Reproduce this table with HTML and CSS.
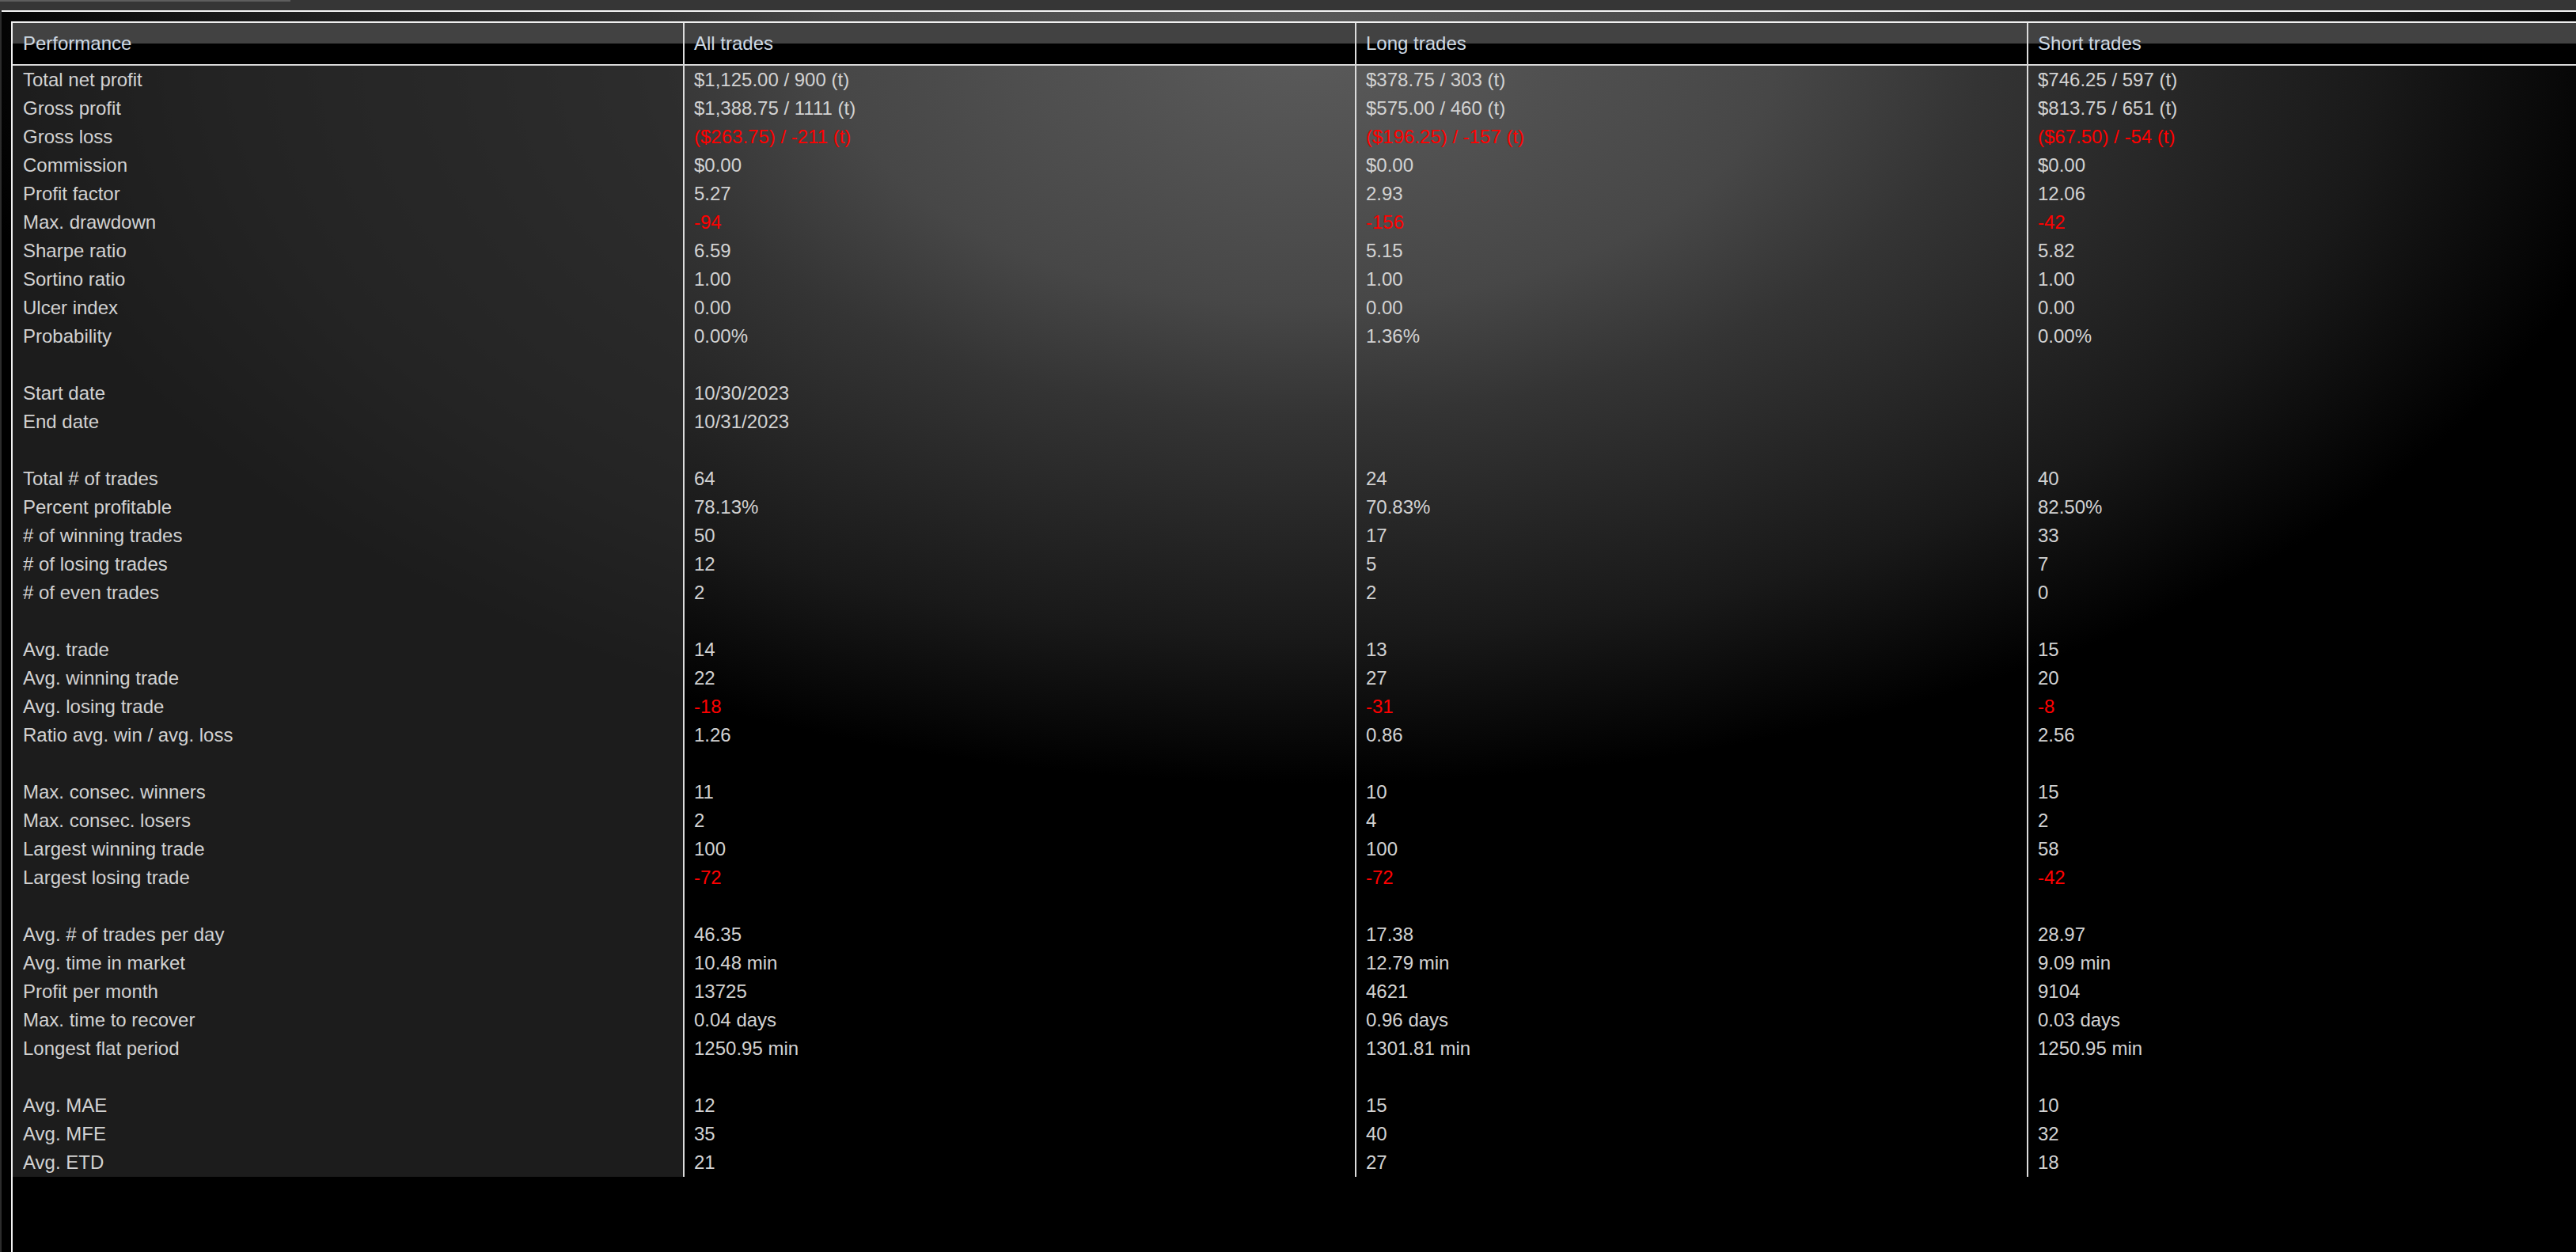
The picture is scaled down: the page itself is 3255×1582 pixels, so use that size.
FILE: index.html
```html
<!DOCTYPE html>
<html lang="en">
<head>
<meta charset="utf-8">
<title>Performance</title>
<link rel="stylesheet" href="styles.css">
</head>
<body>
<div class="topbar"><div class="tab"></div></div>
<div class="panel">
  <div class="frame">
  <div class="grid">
    <div class="row head">
      <div class="cell">Performance</div>
      <div class="cell">All trades</div>
      <div class="cell">Long trades</div>
      <div class="cell">Short trades</div>
    </div>
    <div class="row"><div class="cell">Total net profit</div><div class="cell">$1,125.00 / 900 (t)</div><div class="cell">$378.75 / 303 (t)</div><div class="cell">$746.25 / 597 (t)</div></div>
    <div class="row"><div class="cell">Gross profit</div><div class="cell">$1,388.75 / 1111 (t)</div><div class="cell">$575.00 / 460 (t)</div><div class="cell">$813.75 / 651 (t)</div></div>
    <div class="row"><div class="cell">Gross loss</div><div class="cell neg">($263.75) / -211 (t)</div><div class="cell neg">($196.25) / -157 (t)</div><div class="cell neg">($67.50) / -54 (t)</div></div>
    <div class="row"><div class="cell">Commission</div><div class="cell">$0.00</div><div class="cell">$0.00</div><div class="cell">$0.00</div></div>
    <div class="row"><div class="cell">Profit factor</div><div class="cell">5.27</div><div class="cell">2.93</div><div class="cell">12.06</div></div>
    <div class="row"><div class="cell">Max. drawdown</div><div class="cell neg">-94</div><div class="cell neg">-156</div><div class="cell neg">-42</div></div>
    <div class="row"><div class="cell">Sharpe ratio</div><div class="cell">6.59</div><div class="cell">5.15</div><div class="cell">5.82</div></div>
    <div class="row"><div class="cell">Sortino ratio</div><div class="cell">1.00</div><div class="cell">1.00</div><div class="cell">1.00</div></div>
    <div class="row"><div class="cell">Ulcer index</div><div class="cell">0.00</div><div class="cell">0.00</div><div class="cell">0.00</div></div>
    <div class="row"><div class="cell">Probability</div><div class="cell">0.00%</div><div class="cell">1.36%</div><div class="cell">0.00%</div></div>
    <div class="row"><div class="cell"></div><div class="cell"></div><div class="cell"></div><div class="cell"></div></div>
    <div class="row"><div class="cell">Start date</div><div class="cell">10/30/2023</div><div class="cell"></div><div class="cell"></div></div>
    <div class="row"><div class="cell">End date</div><div class="cell">10/31/2023</div><div class="cell"></div><div class="cell"></div></div>
    <div class="row"><div class="cell"></div><div class="cell"></div><div class="cell"></div><div class="cell"></div></div>
    <div class="row"><div class="cell">Total # of trades</div><div class="cell">64</div><div class="cell">24</div><div class="cell">40</div></div>
    <div class="row"><div class="cell">Percent profitable</div><div class="cell">78.13%</div><div class="cell">70.83%</div><div class="cell">82.50%</div></div>
    <div class="row"><div class="cell"># of winning trades</div><div class="cell">50</div><div class="cell">17</div><div class="cell">33</div></div>
    <div class="row"><div class="cell"># of losing trades</div><div class="cell">12</div><div class="cell">5</div><div class="cell">7</div></div>
    <div class="row"><div class="cell"># of even trades</div><div class="cell">2</div><div class="cell">2</div><div class="cell">0</div></div>
    <div class="row"><div class="cell"></div><div class="cell"></div><div class="cell"></div><div class="cell"></div></div>
    <div class="row"><div class="cell">Avg. trade</div><div class="cell">14</div><div class="cell">13</div><div class="cell">15</div></div>
    <div class="row"><div class="cell">Avg. winning trade</div><div class="cell">22</div><div class="cell">27</div><div class="cell">20</div></div>
    <div class="row"><div class="cell">Avg. losing trade</div><div class="cell neg">-18</div><div class="cell neg">-31</div><div class="cell neg">-8</div></div>
    <div class="row"><div class="cell">Ratio avg. win / avg. loss</div><div class="cell">1.26</div><div class="cell">0.86</div><div class="cell">2.56</div></div>
    <div class="row"><div class="cell"></div><div class="cell"></div><div class="cell"></div><div class="cell"></div></div>
    <div class="row"><div class="cell">Max. consec. winners</div><div class="cell">11</div><div class="cell">10</div><div class="cell">15</div></div>
    <div class="row"><div class="cell">Max. consec. losers</div><div class="cell">2</div><div class="cell">4</div><div class="cell">2</div></div>
    <div class="row"><div class="cell">Largest winning trade</div><div class="cell">100</div><div class="cell">100</div><div class="cell">58</div></div>
    <div class="row"><div class="cell">Largest losing trade</div><div class="cell neg">-72</div><div class="cell neg">-72</div><div class="cell neg">-42</div></div>
    <div class="row"><div class="cell"></div><div class="cell"></div><div class="cell"></div><div class="cell"></div></div>
    <div class="row"><div class="cell">Avg. # of trades per day</div><div class="cell">46.35</div><div class="cell">17.38</div><div class="cell">28.97</div></div>
    <div class="row"><div class="cell">Avg. time in market</div><div class="cell">10.48 min</div><div class="cell">12.79 min</div><div class="cell">9.09 min</div></div>
    <div class="row"><div class="cell">Profit per month</div><div class="cell">13725</div><div class="cell">4621</div><div class="cell">9104</div></div>
    <div class="row"><div class="cell">Max. time to recover</div><div class="cell">0.04 days</div><div class="cell">0.96 days</div><div class="cell">0.03 days</div></div>
    <div class="row"><div class="cell">Longest flat period</div><div class="cell">1250.95 min</div><div class="cell">1301.81 min</div><div class="cell">1250.95 min</div></div>
    <div class="row"><div class="cell"></div><div class="cell"></div><div class="cell"></div><div class="cell"></div></div>
    <div class="row"><div class="cell">Avg. MAE</div><div class="cell">12</div><div class="cell">15</div><div class="cell">10</div></div>
    <div class="row"><div class="cell">Avg. MFE</div><div class="cell">35</div><div class="cell">40</div><div class="cell">32</div></div>
    <div class="row"><div class="cell">Avg. ETD</div><div class="cell">21</div><div class="cell">27</div><div class="cell">18</div></div>
  </div>
  </div>
</div>
</body>
</html>
```

FILE: styles.css
```css
html, body {
  margin: 0;
  padding: 0;
}

body {
  width: 3255px;
  height: 1582px;
  overflow: hidden;
  background: #2c2c2c;
  font-family: "Liberation Sans", Arial, sans-serif;
  font-size: 24px;
  color: #d2d2d2;
}

.topbar {
  height: 13px;
  background: #363636;
}

.tab {
  width: 367px;
  height: 2px;
  background: #5e5e5e;
}

.panel {
  box-sizing: border-box;
  height: 1569px;
  margin-left: 2px;
  padding: 12px 0 0 12px;
  border-top: 2px solid #f4f4f4;
  overflow: hidden;
  background-color: #000;
  background-image: radial-gradient(1700px 930px at 1648px 45px, #5a5a5a 0%, #474747 35%, #343434 50%, #191919 80%, #000 100%);
}

.frame {
  box-sizing: border-box;
  height: 100%;
  border-top: 2px solid #f0f0f0;
  border-left: 2px solid #f0f0f0;
}

.grid {
  width: 3394px;
}

.row {
  display: flex;
  height: 36px;
}

.cell {
  box-sizing: border-box;
  flex: 0 0 849px;
  height: 100%;
  padding-left: 12px;
  border-left: 2px solid #dcdcdc;
  line-height: 36px;
  white-space: nowrap;
  overflow: hidden;
}

.cell:first-child {
  flex-basis: 847px;
  padding-left: 13px;
  border-left: none;
  background: rgba(41, 41, 41, 0.68);
}

.head {
  height: 54px;
  box-sizing: border-box;
  border-bottom: 2px solid #d8d8d8;
  background: linear-gradient(to bottom, #424242 0, #424242 26px, #000 26px, #000 100%);
}

.head .cell {
  line-height: 52px;
  color: #cdd9e4;
}

.head .cell:first-child {
  background: none;
}

.neg {
  color: #ff0000;
}
```
